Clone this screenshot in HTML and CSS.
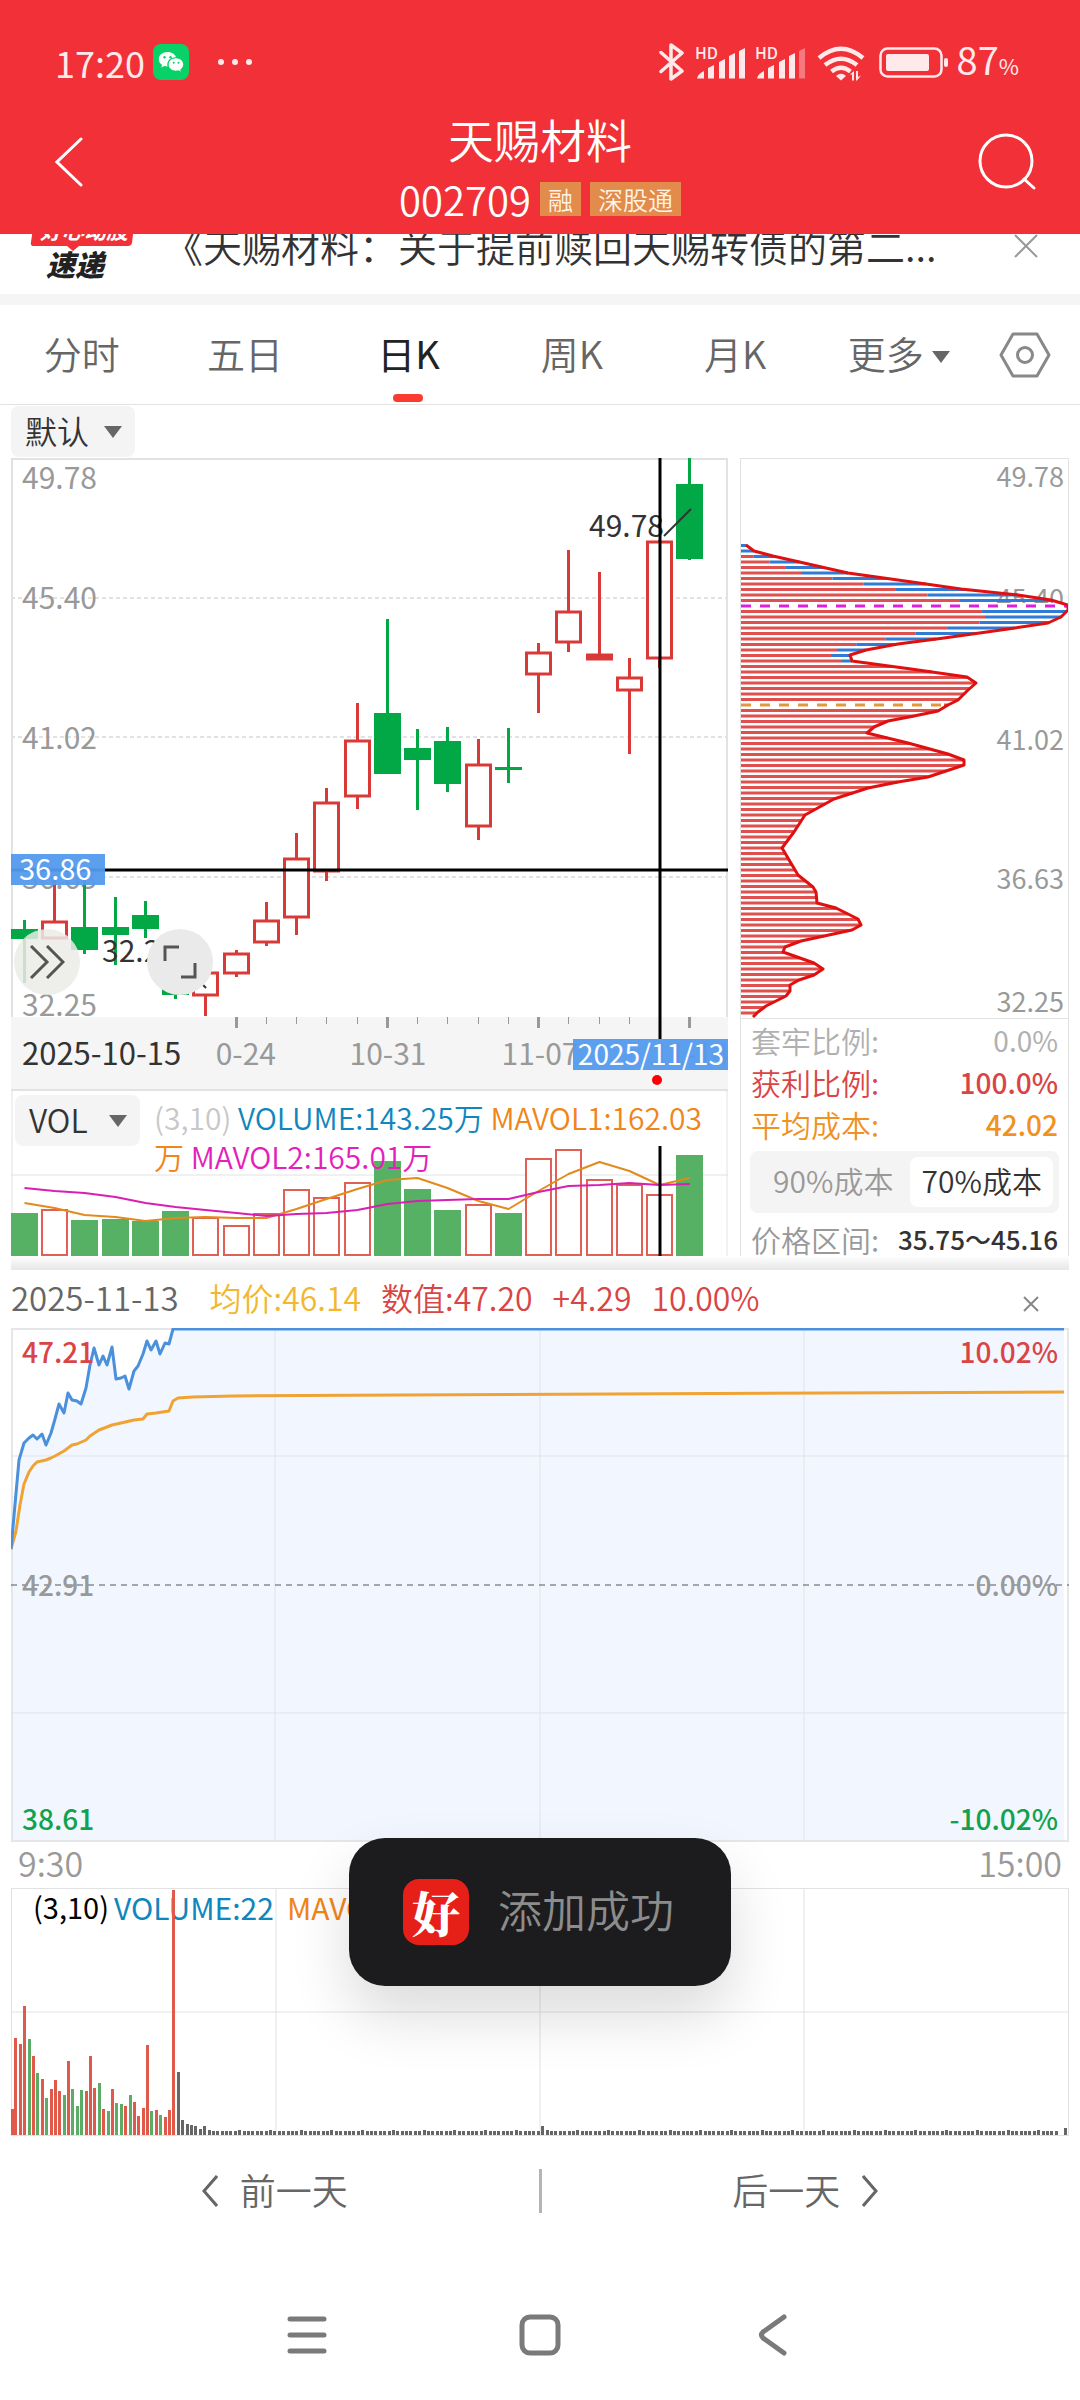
FILE: index.html
```html
<!DOCTYPE html>
<html lang="zh-CN">

<head>
    <meta charset="UTF-8">
    <meta name="viewport" content="width=device-width, initial-scale=1.0">
    <title>天赐材料 002709</title>
    <link rel="stylesheet" href="styles.css">
</head>

<body>
    <header class="header">
        <!-- 状态栏 -->
        <div class="status">
            <span class="time">17:20</span>
            <svg class="wechat" width="36" height="36" viewBox="0 0 36 36">
                <rect width="36" height="36" rx="8" fill="#07d167" />
                <path fill="#fff" d="M14.5 8c-4.900 0-8.700 3.100-8.700 7.200 0 2.400 1.300 4.400 3.300 5.700l-.8 2.500 3-1.500c1 .3 2 .5 3.200.5-1.300-5.400 3-9.300 8.400-9.200C22.100 10.100 18.700 8 14.500 8z" />
                <path fill="#fff" d="M23 14.300c-4.300 0-7.300 2.800-7.300 6.200s3 6.200 7.300 6.200c.9 0 1.700-.1 2.500-.4l2.300 1.300-.6-2.100c1.800-1.200 3-2.900 3-5 0-3.400-3-6.200-7.200-6.200z" />
                <g fill="#07d167">
                    <circle cx="11.500" cy="13.300" r="1.200" />
                    <circle cx="17.500" cy="13.300" r="1.200" />
                    <circle cx="20.700" cy="18.800" r="1" />
                    <circle cx="25.500" cy="18.800" r="1" />
                </g>
            </svg>
            <svg class="dots" width="36" height="8" viewBox="0 0 36 8" fill="#ffe9ea">
                <circle cx="4" cy="4" r="3" />
                <circle cx="18" cy="4" r="3" />
                <circle cx="32" cy="4" r="3" />
            </svg>
            <svg class="signals" width="292" height="40" viewBox="0 0 292 40" fill="#ffe9ea">
                <path d="M2 10.500 23 29 12 37V3l11 8L2 29.500" fill="none" stroke="#ffe9ea" stroke-width="3.500" stroke-linejoin="round" stroke-linecap="round" />
                <text x="36" y="17" class="hd">HD</text>
                <path d="M38 36.500q1-5 7-7.500v7.500zM49 26l6-3v13.500h-6zM60 20l6-3v19.500h-6zM70 14l6-3v25.500h-6zM80 9l6-3v30.500h-6z" />
                <text x="96" y="17" class="hd">HD</text>
                <path d="M98 36.500q1-5 7-7.500v7.500zM109 26l6-3v13.500h-6zM120 20l6-3v19.500h-6zM130 14l6-3v25.500h-6z" />
                <path d="M140 9l6-3v30.500h-6z" opacity=".4" />
                <g fill="none" stroke="#ffe9ea" stroke-width="4.500">
                    <path d="M160 16q22-18.500 44 0" />
                    <path d="M166 23q16-12.500 32 0" />
                    <path d="M172.500 29.500q9.500-7.500 19 0" />
                </g>
                <path d="M177 34q5-4.500 10 0l-5 4.500zM191 32.500l4-3.500v9.500h-2v-6zM197 29h2v6l3-1.500-4 5h-1z" />
                <rect x="221.500" y="6.500" width="61" height="28" rx="7" fill="none" stroke="#ffe9ea" stroke-width="2.500" />
                <rect x="227" y="12" width="43" height="17" rx="2" />
                <rect x="285" y="16" width="4" height="9" rx="2" />
            </svg>
            <span class="battery">87<small>%</small></span>
        </div>
        <div class="title_bar">
            <button class="icon_btn back" aria-label="返回">
                <svg width="28" height="50" viewBox="0 0 28 50" fill="none" stroke="#fff" stroke-width="3" stroke-linecap="round">
                    <path d="M26 2 2 25l24 23" />
                </svg>
            </button>
            <div class="title">
                <h1>天赐材料</h1>
                <p class="code"><span>002709</span><b>融</b><b>深股通</b></p>
            </div>
            <button class="icon_btn search" aria-label="搜索">
                <svg width="60" height="60" viewBox="0 0 60 60" fill="none" stroke="#fff" stroke-width="3" stroke-linecap="round">
                    <circle cx="29" cy="29" r="26" />
                    <path d="m47 47 10 9" />
                </svg>
            </button>
        </div>
    </header>

    <!-- 公告，向上滚动了一部分 -->
    <section class="news">
        <div class="news_inner">
            <svg class="news_logo" width="108" height="96" viewBox="0 0 108 96">
                <path d="M6 10h100l-4 35q-1 3-4 3H49l-6 5-6-5H4q-4 0-3-4z" fill="#f13038" />
                <text x="10" y="41" class="logo_top">好心动股</text>
                <text x="16" y="78" class="logo_bottom">速递</text>
            </svg>
            <a class="news_text" href="#">《天赐材料：关于提前赎回天赐转债的第二...</a>
            <button class="icon_btn" aria-label="关闭公告">
                <svg width="24" height="24" viewBox="0 0 24 24" stroke="#999" stroke-width="2">
                    <path d="m1 1 22 22M23 1 1 23" />
                </svg>
            </button>
        </div>
    </section>

    <nav class="tabs">
        <button class="tab">分时</button>
        <button class="tab">五日</button>
        <button class="tab active">日K</button>
        <button class="tab">周K</button>
        <button class="tab">月K</button>
        <button class="tab">更多<i class="caret"></i></button>
        <button class="setting" aria-label="设置">
            <svg width="52" height="46" viewBox="0 0 52 46" fill="none" stroke="#888" stroke-width="3" stroke-linejoin="round">
                <path d="M14 2h24l12 21-12 21H14L2 23z" />
                <circle cx="26" cy="23" r="7.500" />
            </svg>
        </button>
    </nav>

    <main class="main">
        <div class="toolbar">
            <label class="select select_default">
                <select aria-label="主图指标">
                    <option>默认</option>
                </select>
                <i class="caret"></i>
            </label>
        </div>

        <div class="kline_row">
            <div class="kline">
                <svg id="kline" viewBox="0 0 717 633"></svg>
                <button class="round_btn expand" aria-label="展开">
                    <svg width="36" height="34" viewBox="0 0 36 34" fill="none" stroke="#555" stroke-width="3">
                        <path d="m2 1 16 16L2 33M18 1l16 16-16 16" />
                    </svg>
                </button>
                <button class="round_btn full" aria-label="全屏">
                    <svg width="36" height="36" viewBox="0 0 36 36" fill="none" stroke="#555" stroke-width="3">
                        <path d="M17 3H3v14M19 33h14V19" />
                    </svg>
                </button>
                <div class="volume">
                    <svg id="volume" viewBox="0 0 717 165"></svg>
                    <div class="legend">
                        <label class="select select_vol">
                            <select aria-label="副图指标">
                                <option>VOL</option>
                            </select>
                            <i class="caret"></i>
                        </label>
                        <p><span class="c_light">(3,10)</span> <span class="c_blue">VOLUME:143.25万</span> <span class="c_orange">MAVOL1:162.03万</span> <span class="c_pink">MAVOL2:165.01万</span></p>
                    </div>
                </div>
            </div>

            <!-- 筹码分布 -->
            <div class="chips">
                <svg id="chips" viewBox="0 0 327 559"></svg>
                <dl class="chips_info">
                    <div class="row c_gray">
                        <dt>套牢比例:</dt>
                        <dd>0.0%</dd>
                    </div>
                    <div class="row c_red">
                        <dt>获利比例:</dt>
                        <dd>100.0%</dd>
                    </div>
                    <div class="row c_gold">
                        <dt>平均成本:</dt>
                        <dd>42.02</dd>
                    </div>
                </dl>
                <div class="switch">
                    <button aria-pressed="false">90%成本</button>
                    <button aria-pressed="true" class="on">70%成本</button>
                </div>
                <div class="row range"><span>价格区间:</span><b>35.75～45.16</b></div>
            </div>
        </div>
        <div class="shadow_line"></div>

        <!-- 当日分时 -->
        <div class="day_head">
            <span class="date">2025-11-13</span>
            <span class="c_yellow">均价:46.14</span>
            <span class="c_red">数值:47.20</span>
            <span class="c_red">+4.29</span>
            <span class="c_red">10.00%</span>
            <button class="icon_btn close" aria-label="关闭分时">
                <svg width="16" height="16" viewBox="0 0 16 16" stroke="#888" stroke-width="2">
                    <path d="m1 1 14 14M15 1 1 15" />
                </svg>
            </button>
        </div>
        <svg id="day" viewBox="0 0 1058 514"></svg>
        <div class="day_time"><span>9:30</span><span>15:00</span></div>
        <svg id="day_vol" viewBox="0 0 1058 248"></svg>
    </main>

    <div class="pager">
        <button>
            <svg width="16" height="32" viewBox="0 0 16 32" fill="none" stroke="#666" stroke-width="3">
                <path d="M15 1 2 16l13 15" />
            </svg>
            <span>前一天</span>
        </button>
        <i></i>
        <button>
            <span>后一天</span>
            <svg width="16" height="32" viewBox="0 0 16 32" fill="none" stroke="#666" stroke-width="3">
                <path d="m1 1 13 15L1 31" />
            </svg>
        </button>
    </div>

    <footer class="system_nav">
        <button aria-label="菜单">
            <svg width="42" height="42" viewBox="0 0 42 42" stroke="#7a7a7a" stroke-width="5" stroke-linecap="round">
                <path d="M4 5h34M4 21h34M4 37h34" />
            </svg>
        </button>
        <button aria-label="主页">
            <svg width="42" height="42" viewBox="0 0 42 42" fill="none" stroke="#7a7a7a" stroke-width="5">
                <rect x="3" y="3" width="36" height="36" rx="8" />
            </svg>
        </button>
        <button aria-label="返回上一级">
            <svg width="42" height="42" viewBox="0 0 42 42" fill="none" stroke="#7a7a7a" stroke-width="5" stroke-linecap="round">
                <path d="M32 3 11 18q-3 3 0 6l21 15" />
            </svg>
        </button>
    </footer>

    <div class="toast" role="status">
        <span class="toast_icon">好</span>
        <span class="toast_text">添加成功</span>
    </div>

    <script src="script.js"></script>
</body>

</html>
```
FILE: styles.css
```css
* {
    box-sizing: border-box;
    margin: 0;
    padding: 0;
}

body {
    position: relative;
    background-color: #fff;
    color: #333;
    font-family: 'Noto Sans CJK SC', 'Noto Sans', sans-serif;
    font-weight: 350;
}

button,
select {
    border: none;
    background: none;
    color: inherit;
    font: inherit;
    cursor: pointer;
}

svg {
    display: block;
}

a {
    color: inherit;
    text-decoration: none;
}

/* 顶部 */
.header {
    background-color: #f13038;
    color: #fff;
}

.status {
    display: flex;
    align-items: center;
    height: 117px;
    padding: 7px 61px 0 55px;
    color: #ffe9ea;
    font-size: 38px;
    font-weight: 400;
    line-height: 40px;
}

.status .time {
    font-size: 36px;
}

.wechat {
    margin-left: 8px;
}

.dots {
    margin-left: 28px;
}

.signals {
    margin-left: auto;
}

.hd {
    font-size: 16px;
    font-weight: 500;
}

.battery {
    margin-left: 6px;
}

.battery small {
    font-size: 22px;
}

.title_bar {
    display: flex;
    justify-content: space-between;
    align-items: center;
    height: 117px;
    padding: 0 43px 22px;
}

.title_bar .icon_btn {
    flex: 1;
    display: flex;
    padding-bottom: 5px;
}

.back svg {
    margin-left: 12px;
}

.title_bar .search {
    justify-content: flex-end;
}

.title {
    display: flex;
    flex-direction: column;
    align-items: center;
    gap: 19px;
}

.title h1 {
    font-size: 46px;
    font-weight: 350;
    line-height: 50px;
}

.code {
    display: flex;
    gap: 9px;
    font-size: 40px;
    line-height: 34px;
}

.code b {
    padding: 0 8px;
    background-color: #e28b4b;
    color: #fff3e6;
    font-size: 25px;
    font-weight: 350;
}

/* 公告 */
.news {
    height: 60px;
    overflow: hidden;
}

.news_inner {
    display: flex;
    align-items: center;
    height: 96px;
    margin-top: -36px;
    padding: 0 42px 0 30px;
}

.logo_top {
    fill: #fff;
    font-size: 22px;
    font-weight: 700;
    font-style: italic;
}

.logo_bottom {
    fill: #222;
    font-size: 29px;
    font-weight: 900;
    font-style: italic;
}

.news_text {
    flex: 1;
    padding-bottom: 3px;
    margin: 0 60px 0 26px;
    overflow: hidden;
    font-size: 39px;
    line-height: 56px;
    white-space: nowrap;
    text-overflow: ellipsis;
}

/* 周期切换 */
.tabs {
    display: flex;
    height: 111px;
    padding-right: 14px;
    border-top: 11px solid #f5f5f5;
    border-bottom: 1px solid #e2e2e2;
}

.tab {
    position: relative;
    flex: 2;
    padding-bottom: 5px;
    color: #666;
    font-size: 38px;
}

.tab.active {
    color: #222;
    font-weight: 400;
}

.tab.active::after {
    content: '';
    position: absolute;
    left: 50%;
    bottom: 2px;
    width: 30px;
    height: 8px;
    margin-left: -15px;
    border-radius: 4px;
    background-color: #fb3a30;
}

.setting {
    display: flex;
    flex: 1;
    align-items: center;
    justify-content: center;
    padding-left: 4px;
}

.caret {
    display: inline-block;
    border: 9px solid transparent;
    border-top: 12px solid #666;
    border-bottom: 0;
}

.tab .caret {
    margin-left: 8px;
    vertical-align: 6px;
}

/* 行情主体 */
.main {
    padding: 0 11px;
}

.select {
    display: flex;
    align-items: center;
    height: 51px;
    border-radius: 8px;
    background-color: #f4f4f4;
}

.select select {
    flex: 1;
    padding: 0 0 4px 14px;
    appearance: none;
    font-size: 32px;
    line-height: 46px;
}

.select .caret {
    margin-right: 13px;
    pointer-events: none;
}

.select_default {
    width: 124px;
}

.select_vol {
    flex: none;
    width: 125px;
}

.toolbar {
    padding: 1px 0;
}

.kline_row {
    display: grid;
    grid-template-columns: 717fr 329fr;
    gap: 12px;
}

.kline,
.volume {
    position: relative;
}

.round_btn {
    position: absolute;
    top: 471px;
    display: flex;
    align-items: center;
    justify-content: center;
    width: 66px;
    height: 66px;
    border-radius: 50%;
    background-color: rgba(235, 235, 232, .85);
}

.expand {
    left: 3px;
}

.full {
    left: 136px;
    background-color: #eaeaea;
}

.legend {
    position: absolute;
    top: 4px;
    left: 4px;
    right: 4px;
    display: flex;
    gap: 14px;
    font-size: 30px;
    line-height: 39px;
}

.legend p {
    padding-top: 3px;
}

.c_light {
    color: #c8c8c8;
}

.c_blue {
    color: #0f87bd;
}

.c_orange {
    color: #f08519;
}

.c_pink {
    color: #e31fbc;
}

.c_gray {
    color: #b0b0b0;
}

.c_red {
    color: #d94545;
}

.c_gold {
    color: #f0921f;
}

.c_yellow {
    color: #f3b72d;
}

.chips {
    border: 1px solid #e2e2e2;
    border-bottom: none;
}

.chips_info {
    padding-bottom: 6px;
    border-top: 1px solid #e2e2e2;
}

.row {
    display: flex;
    justify-content: space-between;
    padding: 0 10px;
    font-size: 30px;
    line-height: 42px;
}

.row dd {
    font-size: 28px;
    font-weight: 400;
}

.row.c_red dd,
.row.c_gold dd {
    font-weight: 500;
}

.switch {
    display: flex;
    margin: 0 9px;
    padding: 6px;
    border-radius: 8px;
    background-color: #f4f4f4;
    color: #999;
    font-size: 30px;
    line-height: 46px;
}

.switch button {
    flex: 1;
    padding-bottom: 4px;
    border-radius: 8px;
}

.switch .on {
    flex: 0 0 48%;
    background-color: #fff;
    color: #333;
}

.range {
    margin-top: 11px;
    color: #999;
    line-height: 30px;
}

.range b {
    color: #333;
    font-size: 26px;
    font-weight: 500;
}

.shadow_line {
    height: 14px;
    background: linear-gradient(#fff, #e6e6e6);
}

.day_head {
    display: flex;
    align-items: center;
    gap: 20px;
    height: 58px;
    padding-bottom: 4px;
    font-size: 32px;
    line-height: 40px;
}

.day_head .date {
    margin-right: 11px;
    color: #666;
    font-size: 33px;
}

.day_head .close {
    margin: 14px 30px 0 auto;
}

.day_time {
    display: flex;
    justify-content: space-between;
    padding: 0 7px 4px;
    color: #999;
    font-size: 34px;
    line-height: 42px;
}

.axis {
    font-weight: 400;
}

.axis_bold {
    font-weight: 500;
}

/* 底部 */
.pager {
    display: flex;
    align-items: center;
    height: 110px;
    padding: 0 11px;
    color: #666;
    font-size: 36px;
}

.pager button {
    display: flex;
    flex: 1;
    align-items: center;
    justify-content: center;
    gap: 22px;
}

.pager span {
    padding-bottom: 4px;
}

.pager i {
    width: 3px;
    height: 44px;
    background-color: #b4b4b4;
}

.system_nav {
    display: flex;
    justify-content: space-around;
    align-items: flex-start;
    height: 154px;
    padding: 68px 190px 0;
}

.system_nav button {
    display: flex;
    justify-content: center;
    width: 60px;
}

.toast {
    position: absolute;
    top: 1838px;
    left: 50%;
    display: flex;
    align-items: center;
    gap: 29px;
    height: 148px;
    padding: 0 57px 0 54px;
    border-radius: 36px;
    background-color: #1c1c1e;
    box-shadow: 0 30px 60px rgba(0, 0, 0, .14);
    color: #8c8c8c;
    font-size: 44px;
    white-space: nowrap;
    transform: translateX(-50%);
}

.toast_text {
    padding-bottom: 6px;
}

.toast_icon {
    width: 66px;
    border-radius: 16px;
    background-color: #e71f19;
    color: #fff;
    font-family: 'Noto Serif CJK SC', 'Noto Sans CJK SC', serif;
    font-size: 48px;
    font-weight: 900;
    line-height: 66px;
    text-align: center;
}
```
FILE: script.js
```js
// 画线、画字的小工具，都返回 svg 字符串
function line(x1, y1, x2, y2, color, width, dash) {
    return '<line x1="' + x1 + '" y1="' + y1 + '" x2="' + x2 + '" y2="' + y2 + '" stroke="' + color +
        '" stroke-width="' + (width || 2) + '"' + (dash ? ' stroke-dasharray="' + dash + '"' : '') + '/>';
}
function rect(x, y, w, h, fill, stroke, strokeWidth) {
    return '<rect x="' + x + '" y="' + y + '" width="' + w + '" height="' + h + '" fill="' + fill + '"' +
        (stroke ? ' stroke="' + stroke + '" stroke-width="' + (strokeWidth || 2) + '"' : '') + '/>';
}
// y 为文字的垂直中心
function text(x, y, str, size, color, anchor, cls) {
    return '<text x="' + x + '" y="' + (y + Math.round(size * 0.36)) + '" font-size="' + size + '" fill="' + color +
        '" text-anchor="' + (anchor || 'start') + '" class="' + (cls || 'axis') + '">' + str + '</text>';
}
function poly(points, color, width) {
    return '<polyline points="' + points.join(' ') + '" fill="none" stroke="' + color +
        '" stroke-width="' + width + '" stroke-linejoin="round"/>';
}
function draw(id, html) {
    document.querySelector('#' + id).innerHTML = html;
}

var RED = '#d93a38', GREEN = '#02a845', GRAY = '#999', GRID = '#e2e2e2';

function centerX(i) {
    return Math.round(14 + i * 30.24) - 0.5;
}

// K线：[涨1跌0, 最高, 实体上沿, 实体下沿, 最低]
var candles = [
    [0, 462, 471, 481, 525], [1, 420, 463, 480, 480], [0, 418, 469, 492, 496], [0, 439, 469, 477, 507],
    [0, 443, 457, 471, 480], [0, 520, 530, 537, 541], [1, 514, 514, 537, 558], [1, 492, 495, 515, 519],
    [1, 444, 462, 484, 488], [1, 375, 400, 459, 477], [1, 330, 344, 413, 423], [1, 245, 282, 338, 351],
    [0, 161, 255, 316, 316], [0, 271, 290, 302, 352], [0, 269, 283, 326, 334], [1, 281, 306, 368, 382],
    [0, 270, 309, 312, 325], [1, 185, 194, 216, 255], [1, 92, 153, 184, 194], [1, 114, 196, 201, 201],
    [1, 200, 219, 232, 296], [1, 82, 83, 200, 210], [0, 0, 26, 101, 102]
];

function drawKline() {
    var s = rect(1, 1, 715, 560, '#fff', GRID);
    [140, 279, 419].forEach(function (y) {
        s += line(0, y, 716, y, GRID, 2, '4 3');
    });
    [[20, '49.78'], [140, '45.40'], [280, '41.02'], [420, '36.63'], [547, '32.25']].forEach(function (l) {
        s += text(11, l[0], l[1], 30, GRAY);
    });
    candles.forEach(function (c, i) {
        var x = centerX(i), color = c[0] ? RED : GREEN;
        s += line(x, c[1], x, c[2], color, 3) + line(x, c[3], x, c[4], color, 3);
        if (c[0]) {
            s += rect(x - 12, c[2] + 1, 24, c[3] - c[2] - 1, c[3] - c[2] > 5 ? '#fff' : RED, RED, 3);
        } else {
            s += rect(x - 13.5, c[2], 27, c[3] - c[2], color);
        }
    });
    s += text(91, 493, '32.25', 30, '#333') + line(166, 500, 195, 530, '#333');
    s += text(578, 68, '49.78', 30, '#333') + line(653, 78, 680, 51, '#333');
    // 日期条
    s += rect(0, 559, 717, 74, '#f5f5f5');
    for (var i = 7; i < 23; i++) {
        var big = (i - 7) % 5 === 0;
        s += line(centerX(i), 559, centerX(i), big ? 570 : 566, GRAY, big ? 3 : 1);
    }
    s += text(11, 596, '2025-10-15', 31, '#333');
    s += text(265, 596, '0-24', 30, GRAY, 'end') + text(377, 596, '10-31', 30, GRAY, 'middle');
    s += text(529, 596, '11-07', 30, GRAY, 'middle') + text(680, 596, '11-14', 30, GRAY, 'middle');
    // 十字光标
    s += line(649, 0, 649, 581, '#000', 3) + line(0, 412, 717, 412, '#000', 3);
    s += '<g opacity=".95">' + rect(0, 396, 94, 31, '#549aee') + rect(562, 581, 155, 31, '#549aee') + '</g>';
    s += text(8, 412, '36.86', 29, '#fff') + text(640, 597, '2025/11/13', 28, '#fff', 'middle');
    s += '<circle cx="646" cy="622" r="5" fill="#f00"/>' + line(0, 632, 717, 632, GRID);
    draw('kline', s);
}

// 成交量：柱顶的 y
var volumes = [122, 118, 129, 128, 130, 120, 126, 134, 122, 98, 106, 91, 70, 98, 119, 113, 122, 67, 58, 88, 93, 103, 64];
var ma1 = [112, 117, 124, 126, 130, 127, 126, 127, 127, 118, 108, 98, 89, 87, 97, 110, 118, 100, 83, 71, 80, 94, 87];
var ma2 = [97, 100, 102, 106, 112, 116, 119, 122, 125, 123, 122, 119, 113, 110, 109, 108, 108, 101, 95, 94, 92, 94, 93];

function drawVolume() {
    var s = line(0, 84, 717, 84, GRID, 1) + line(716, 0, 716, 165, GRID, 1) + line(1, 0, 1, 165, GRID, 1);
    volumes.forEach(function (y, i) {
        var left = centerX(i) - 13.5;
        if (candles[i][0]) {
            s += rect(left + 1, y + 1, 25, 163 - y, '#fff', '#e06055');
        } else {
            s += rect(left, y, 27, 165 - y, '#57b165');
        }
    });
    function toPoint(y, i) {
        return centerX(i) + ',' + y;
    }
    s += poly(ma1.map(toPoint), '#e38a1c', 2) + poly(ma2.map(toPoint), '#d81fb4', 2);
    s += line(649, 55, 649, 165, '#000', 3);
    draw('volume', s);
}

// 筹码轮廓 [宽度, y]
var outline = [
    [5, 86], [13, 92], [32, 97], [107, 114], [157, 121], [220, 130], [277, 136], [310, 141], [327, 146], [327, 151],
    [320, 158], [307, 164], [267, 170], [203, 179], [157, 185], [125, 191], [109, 196], [111, 202], [170, 210],
    [226, 218], [235, 224], [226, 232], [217, 241], [207, 246], [197, 252], [173, 257], [147, 262], [133, 268],
    [126, 274], [167, 284], [207, 295], [223, 301], [223, 306], [187, 318], [157, 323], [127, 329], [93, 340],
    [64, 356], [53, 373], [41, 389], [57, 416], [72, 428], [75, 433], [76, 444], [95, 449], [117, 460],
    [120, 466], [111, 471], [60, 482], [44, 488], [42, 493], [73, 504], [82, 510], [73, 516], [58, 521],
    [49, 526], [49, 532], [45, 537], [25, 547], [17, 553], [12, 558]
];
// 红蓝分界
var inner = [[0, 86], [0, 92], [14, 98], [60, 114], [157, 131], [222, 142], [242, 153], [244, 158], [238, 164],
    [207, 169], [177, 174], [117, 185], [96, 191], [89, 196], [100, 202], [170, 210]];

function widthAt(list, y) {
    for (var i = 1; i < list.length; i++) {
        if (y <= list[i][1]) {
            var a = list[i - 1], b = list[i];
            return a[0] + (b[0] - a[0]) * (y - a[1]) / (b[1] - a[1]);
        }
    }
    return list[list.length - 1][0];
}

function drawChips() {
    var s = '';
    [[18, '49.78'], [140, '45.40'], [281, '41.02'], [420, '36.63'], [543, '32.25']].forEach(function (l) {
        s += text(323, l[0], l[1], 27, GRAY, 'end');
    });
    for (var k = 0; k < 86; k++) {
        var y = 86.5 + k * 5.5, w = widthAt(outline, y);
        var red = y < 206 ? Math.min(widthAt(inner, y), w) : w;
        s += rect(0, y - 1.5, red, 3, '#e0504e');
        if (red < w) {
            s += rect(red, y - 1.5, w - red, 3, '#2f7bd6');
        }
    }
    s += rect(0, 144, 324, 6, '#fff') + line(0, 147, 327, 147, '#e01ee0', 3, '10 9');
    s += rect(0, 243, 203, 6, '#fff') + line(0, 246, 204, 246, '#e3963c', 3, '10 9');
    s += poly(outline, '#e01010', 3);
    draw('chips', s);
}

// 分时价格
var price = [[0, 221], [8, 132], [13, 115], [18, 110], [22, 107], [26, 111], [31, 106], [35, 117], [40, 105], [44, 91],
    [48, 76], [53, 85], [57, 65], [61, 72], [66, 73], [70, 76], [75, 60], [79, 37], [83, 20], [88, 37], [92, 28],
    [96, 37], [101, 19], [105, 51], [110, 50], [114, 48], [118, 61], [123, 43], [127, 38], [132, 26], [136, 13],
    [140, 22], [145, 13], [149, 26], [154, 15], [158, 16], [162, 1], [1053, 1]];
var avg = [[0, 221], [5, 203], [9, 177], [13, 156], [18, 144], [22, 138], [26, 134], [35, 132], [40, 130], [44, 128],
    [53, 123], [57, 120], [61, 117], [66, 116], [75, 112], [79, 108], [88, 102], [96, 99], [101, 97], [110, 95],
    [123, 92], [132, 91], [136, 86], [145, 85], [158, 83], [162, 73], [167, 70], [182, 69], [222, 68], [389, 67], [1053, 64]];

function drawDay() {
    var s = '<polygon fill="#f2f7ff" points="0,512 ' + price.join(' ') + ' 1053,512"/>';
    s += rect(1, 1, 1056, 512, 'none', '#e4e6ea');
    [264, 529, 793].forEach(function (x) {
        s += line(x, 0, x, 514, '#dfe3ea', 1);
    });
    s += line(0, 128, 1058, 128, '#dfe3ea', 1) + line(0, 385, 1058, 385, '#dfe3ea', 1);
    s += line(0, 257, 1058, 257, '#555', 1, '6 5');
    s += poly(avg, '#f0a232', 3) + poly(price, '#4a90dc', 3);
    s += text(11, 25, '47.21', 28, '#d94545', 'start', 'axis_bold') + text(1047, 25, '10.02%', 28, '#d94545', 'end', 'axis_bold');
    s += text(11, 258, '42.91', 28, GRAY, 'start', 'axis_bold') + text(1047, 258, '0.00%', 28, GRAY, 'end', 'axis_bold');
    s += text(11, 492, '38.61', 28, '#12a24c', 'start', 'axis_bold') + text(1047, 492, '-10.02%', 28, '#12a24c', 'end', 'axis_bold');
    draw('day', s);
}

// 分时成交量，前 38 分钟为红绿柱，之后为灰柱
var dayVolumes = [26, 97, 91, 129, 96, 79, 62, 56, 37, 46, 55, 44, 40, 74, 46, 29, 45, 44, 79, 47, 52, 26, 24, 46, 32,
    31, 29, 40, 33, 19, 27, 90, 24, 25, 20, 18, 25, 245, 63, 15, 11, 10, 9, 6, 9];
var dayColors = 'rrrrgrgrgrrrgrgggrrrgrgrggrgrrrrgrgrrrk';

function drawDayVolume() {
    var s = rect(0.5, 0.5, 1057, 247, '#fff', GRID, 1);
    [265, 529, 793].forEach(function (x) {
        s += line(x, 0, x, 248, GRID, 1);
    });
    s += line(0, 124, 1058, 124, GRID, 1);
    s += text(22, 21, '(3,10)', 29, '#000') + text(103, 21, 'VOLUME:22', 30, '#0f87bd') + text(276, 21, 'MAVOL1:22', 30, '#f08519');
    for (var i = 0; i <= 240; i++) {
        var h = dayVolumes[i] || (i % 7 === 3 ? 5 : 4);
        if (i === 121) h = 9;
        if (i === 239) continue;
        if (i === 240) h = 7;
        var key = dayColors[i];
        var color = key === 'r' ? '#e05a4c' : key === 'g' ? '#5cab67' : '#666';
        s += rect(Math.max(Math.round(i * 4.39) - 1, 0), 247 - h, 3, h, color);
    }
    draw('day_vol', s);
}

drawKline();
drawVolume();
drawChips();
drawDay();
drawDayVolume();
```
